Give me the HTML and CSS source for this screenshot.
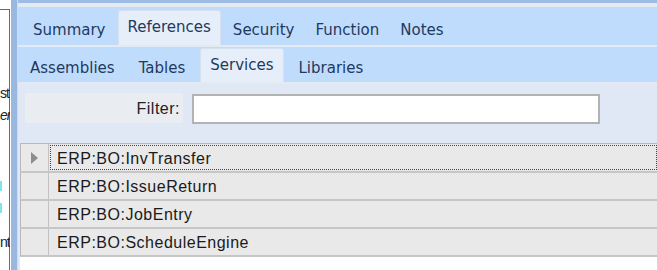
FILE: index.html
```html
<!DOCTYPE html>
<html lang="en">
<head>
    <meta charset="UTF-8">
    <meta name="viewport" content="width=device-width, initial-scale=1.0">
    <title>Service References</title>
    <link rel="stylesheet" href="styles.css">
</head>
<body>

    <div class="side">
        <div class="sideItem top1">st</div>
        <div class="sideItem top2"><i>er</i></div>
        <div class="sideMark mark1"></div>
        <div class="sideMark mark2"></div>
        <div class="sideItem top3">nt</div>
    </div>
    <div class="splitter"></div>

    <div class="main">
        <div class="topStrip"></div>
        <div class="tabBar first">
            <div class="tab">Summary</div>
            <div class="tab active">References</div>
            <div class="tab">Security</div>
            <div class="tab">Function</div>
            <div class="tab">Notes</div>
        </div>
        <div class="tabBar second">
            <div class="tab">Assemblies</div>
            <div class="tab">Tables</div>
            <div class="tab active">Services</div>
            <div class="tab">Libraries</div>
        </div>

        <div class="filterArea">
            <label class="filterLabel" for="filter">Filter:</label>
            <input type="text" id="filter" class="filterInput">
        </div>

        <div class="grid">
            <div class="row current">
                <div class="rowHeader"><span class="arrow"></span></div>
                <div class="cell"><span class="focus">ERP:BO:InvTransfer</span></div>
            </div>
            <div class="row">
                <div class="rowHeader"></div>
                <div class="cell">ERP:BO:IssueReturn</div>
            </div>
            <div class="row">
                <div class="rowHeader"></div>
                <div class="cell">ERP:BO:JobEntry</div>
            </div>
            <div class="row">
                <div class="rowHeader"></div>
                <div class="cell">ERP:BO:ScheduleEngine</div>
            </div>
        </div>
    </div>

</body>
</html>
```

FILE: styles.css
```css
html, body {
    margin: 0;
    padding: 0;
}
body {
    width: 657px;
    height: 270px;
    overflow: hidden;
    display: flex;
    background: white;
    font-family: "Liberation Sans", Arial, sans-serif;
}
.side {
    width: 9px;
    margin-top: 9px;
    border-top: 1px solid #6a6a6a;
    border-right: 1px solid #6a6a6a;
    background: white;
    font-size: 14px;
    color: #222;
}
.sideItem {
    height: 22px;
    line-height: 22px;
    text-align: right;
    letter-spacing: -1px;
    white-space: nowrap;
}
.top1 { margin-top: 72px; }
.sideMark {
    width: 2px;
    height: 10px;
    background: #7fe6ee;
}
.mark1 { margin-top: 55px; }
.mark2 { margin-top: 12px; }
.top3 { margin-top: 18px; }
.splitter {
    width: 6px;
    background: #98b8e0;
    border-left: 1px solid #ffffff;
}
.main {
    flex: 1;
    display: flex;
    flex-direction: column;
    background: #dfe8f4;
    border-left: 1px solid #cfdcec;
}
.topStrip {
    height: 3px;
    background: #9dbde6;
    border-bottom: 4px solid #e4eaf2;
}
.tabBar {
    display: flex;
    align-items: flex-end;
    background: #c0dcfd;
    font-family: "DejaVu Sans", Verdana, sans-serif;
    font-size: 15px;
    color: #1e3a5f;
}
.tabBar.first {
    height: 38px;
    padding-left: 6px;
    gap: 3px;
    border-bottom: 2px solid #e4eaf2;
}
.tabBar.second {
    height: 35px;
    padding-left: 3px;
    gap: 6px;
    border-bottom: 2px solid #e4eaf2;
}
.tab {
    padding: 0 9px;
    height: 33px;
    line-height: 36px;
}
.tabBar.second .tab {
    height: 33px;
    line-height: 38px;
}
.tab.active {
    background: #e6eef9;
    border: 1px solid #d6e1ef;
    border-bottom: none;
    border-radius: 3px 3px 0 0;
    height: 34px;
    line-height: 32px;
}
.tabBar.second .tab.active {
    height: 33px;
    line-height: 33px;
}
.filterArea {
    height: 59px;
    display: flex;
    align-items: flex-start;
    padding-top: 9px;
    box-sizing: border-box;
}
.filterLabel {
    margin-left: 7px;
    width: 158px;
    height: 30px;
    line-height: 32px;
    background: #e9edf2;
    text-align: right;
    padding-right: 3px;
    box-sizing: border-box;
    font-size: 16px;
    letter-spacing: 0.5px;
    color: #222;
}
.filterInput {
    margin-left: 9px;
    margin-top: 1px;
    width: 408px;
    height: 30px;
    box-sizing: border-box;
    border: 2px solid #b3b3b3;
    border-radius: 0;
    background: white;
    padding: 0;
}
.grid {
    flex: 1;
    background: white;
    margin-left: 2px;
}
.row {
    display: flex;
    height: 28px;
    box-sizing: border-box;
    background: #e9e9e9;
    border-top: 1px solid #b9b9b9;
    border-left: 1px solid #b9b9b9;
}
.row:last-child {
    border-bottom: 2px solid #c6c6c6;
    height: 30px;
}
.row + .row {
    border-top: 2px solid #c6c6c6;
}
.rowHeader {
    width: 27px;
    border-right: 1px solid #c2c2c2;
    display: flex;
    align-items: center;
    justify-content: center;
}
.arrow {
    width: 0;
    height: 0;
    border-left: 7px solid #8d8d8d;
    border-top: 6px solid transparent;
    border-bottom: 6px solid transparent;
}
.cell {
    flex: 1;
    display: flex;
    align-items: center;
    padding-left: 8px;
    padding-top: 2px;
    font-size: 16px;
    letter-spacing: 0.5px;
    color: #1a1a1a;
}
.current .cell {
    padding: 1px 0 1px 1px;
}
.focus {
    flex: 1;
    align-self: stretch;
    display: flex;
    align-items: center;
    padding-left: 6px;
    padding-top: 2px;
    border: 1px dotted #444;
}
```
